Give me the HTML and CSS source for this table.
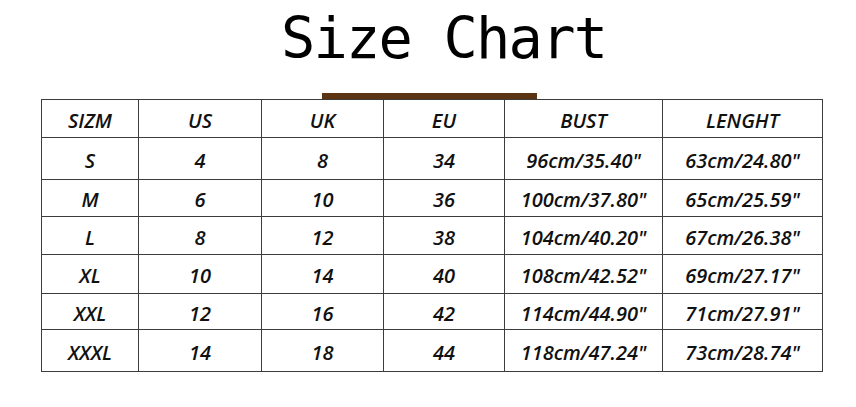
FILE: index.html
```html
<!DOCTYPE html>
<html>
<head>
<meta charset="utf-8">
<link rel="stylesheet" href="styles.css">
</head>
<body>
<div class="page">
  <h1 class="title">Size Chart</h1>
  <div class="bar"></div>
  <div class="chart">
    <div class="cell">SIZM</div><div class="cell">US</div><div class="cell">UK</div><div class="cell">EU</div><div class="cell">BUST</div><div class="cell">LENGHT</div>
    <div class="cell">S</div><div class="cell">4</div><div class="cell">8</div><div class="cell">34</div><div class="cell">96cm/35.40"</div><div class="cell">63cm/24.80"</div>
    <div class="cell">M</div><div class="cell">6</div><div class="cell">10</div><div class="cell">36</div><div class="cell">100cm/37.80"</div><div class="cell">65cm/25.59"</div>
    <div class="cell">L</div><div class="cell">8</div><div class="cell">12</div><div class="cell">38</div><div class="cell">104cm/40.20"</div><div class="cell">67cm/26.38"</div>
    <div class="cell">XL</div><div class="cell">10</div><div class="cell">14</div><div class="cell">40</div><div class="cell">108cm/42.52"</div><div class="cell">69cm/27.17"</div>
    <div class="cell">XXL</div><div class="cell">12</div><div class="cell">16</div><div class="cell">42</div><div class="cell">114cm/44.90"</div><div class="cell">71cm/27.91"</div>
    <div class="cell">XXXL</div><div class="cell">14</div><div class="cell">18</div><div class="cell">44</div><div class="cell">118cm/47.24"</div><div class="cell">73cm/28.74"</div>
  </div>
</div>
</body>
</html>
```

FILE: styles.css
```css
html, body {
  margin: 0;
  padding: 0;
  background: #fff;
}
.page {
  width: 856px;
  height: 407px;
  padding: 10px 0 0 41px;
  box-sizing: border-box;
  display: flex;
  flex-direction: column;
  align-items: flex-start;
}
.title {
  margin: 0 0 0 240px;
  font-family: "DejaVu Sans Mono", monospace;
  font-weight: normal;
  font-size: 57px;
  line-height: 57px;
  letter-spacing: -1.8px;
  color: #000;
}
.bar {
  margin: 26px 0 0 281px;
  width: 215px;
  height: 6px;
  background: #5b3411;
}
.chart {
  display: grid;
  grid-template-columns: 96px 122px 121px 120px 157px 159px;
  grid-template-rows: 37px 41px 36px 37px 38px 35px 41px;
  gap: 1px;
  background: #3c3c3c;
  border: 1px solid #3c3c3c;
  margin-top: 0;
}
.cell {
  background: #fff;
  display: flex;
  align-items: center;
  justify-content: center;
  padding-top: 3px;
  box-sizing: border-box;
  font-family: "Open Sans", sans-serif;
  font-style: italic;
  font-weight: 600;
  font-size: 20px;
  color: #111;
}
```
